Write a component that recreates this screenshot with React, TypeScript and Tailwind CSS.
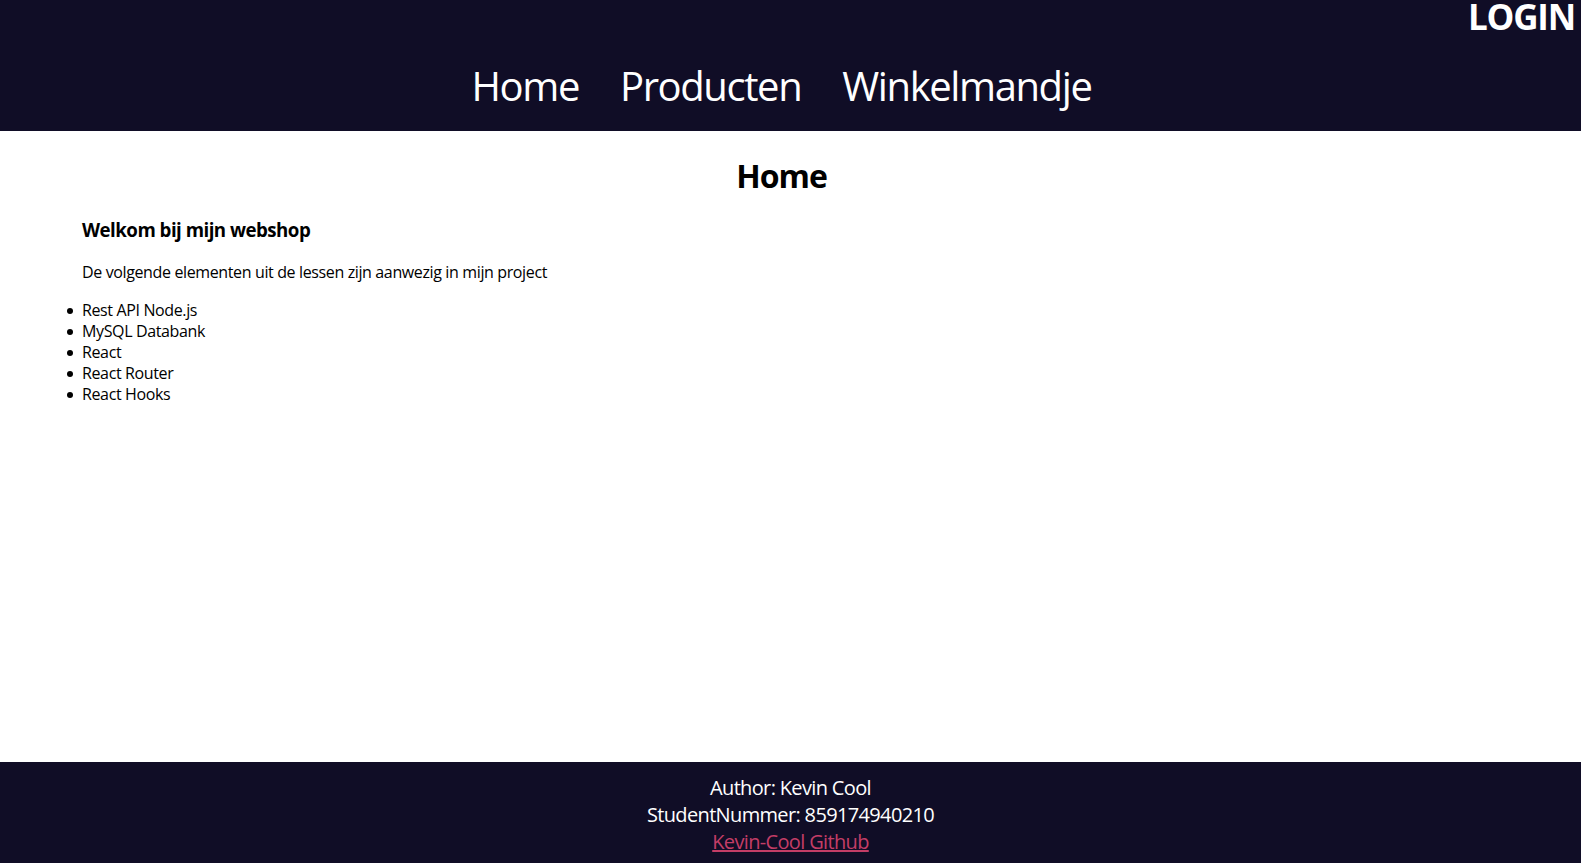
import React from "react";

const font = { fontFamily: '"Open Sans", "Noto Sans", sans-serif' };

const items = ["Rest API Node.js", "MySQL Databank", "React", "React Router", "React Hooks"];

export default function App() {
  return (
    <div className="flex h-[863px] flex-col bg-white" style={font}>
      <header className="h-[131px] shrink-0 bg-[#100d26] text-white">
        <div className="flex justify-end pr-[6px]">
          <a className="text-[35px] font-bold leading-[34px] tracking-[-1.2px]">LOGIN</a>
        </div>
        <nav className="mt-[28px] flex justify-center gap-[41px] pr-[18px] text-[40px] leading-[48px] tracking-[-1.4px]">
          <a>Home</a>
          <a>Producten</a>
          <a>Winkelmandje</a>
        </nav>
      </header>
      <main className="flex-1 text-black">
        <h1 className="pr-[18px] pt-[25px] text-center text-[32px] font-bold leading-[40px] tracking-[-1px]">Home</h1>
        <div className="pl-[82px]">
          <h3 className="mt-[22px] text-[18.72px] font-bold leading-[24px] tracking-[-0.52px]">
            Welkom bij mijn webshop
          </h3>
          <p className="mt-[20px] text-[16px] leading-[21px] tracking-[-0.37px]">
            De volgende elementen uit de lessen zijn aanwezig in mijn project
          </p>
          <ul className="mt-[17px] text-[16px] leading-[21px] tracking-[-0.37px]">
            {items.map((t) => (
              <li
                key={t}
                className="relative before:absolute before:left-[-15px] before:top-[8px] before:h-[6px] before:w-[6px] before:rounded-full before:bg-black before:content-['']"
              >
                {t}
              </li>
            ))}
          </ul>
        </div>
      </main>
      <footer className="h-[101px] shrink-0 bg-[#100d26] pt-[12px] text-center text-[20px] leading-[27px] tracking-[-0.65px] text-white">
        <p>Author: Kevin Cool</p>
        <p>StudentNummer: 859174940210</p>
        <a className="text-[#c43d66] underline">Kevin-Cool Github</a>
      </footer>
    </div>
  );
}
